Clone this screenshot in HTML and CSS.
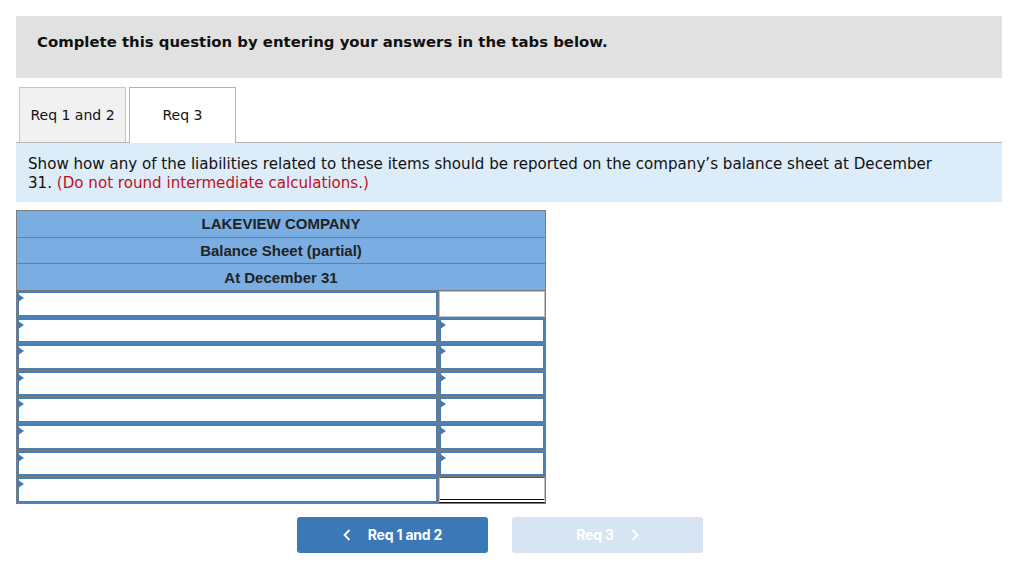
FILE: index.html
```html
<!DOCTYPE html>
<html lang="en">
<head>
	<meta charset="UTF-8">
	<title>Req 3</title>
	<link rel="stylesheet" href="styles.css">
</head>
<body>
	<div class="page">
		<div class="intro">Complete this question by entering your answers in the tabs below.</div>

		<ul class="tabs">
			<li class="tab">Req 1 and 2</li>
			<li class="tab active">Req 3</li>
		</ul>

		<div class="note">
			Show how any of the liabilities related to these items should be reported on the company’s balance sheet at December<br>31. <span class="red">(Do not round intermediate calculations.)</span>
		</div>

		<table class="sheet">
			<tr><th colspan="2">LAKEVIEW COMPANY</th></tr>
			<tr><th colspan="2">Balance Sheet (partial)</th></tr>
			<tr><th colspan="2">At December 31</th></tr>
			<tr>
				<td class="name"><div class="box"></div></td>
				<td class="amt"><div class="box empty"></div></td>
			</tr>
			<tr>
				<td class="name"><div class="box"></div></td>
				<td class="amt"><div class="box"></div></td>
			</tr>
			<tr>
				<td class="name"><div class="box"></div></td>
				<td class="amt"><div class="box"></div></td>
			</tr>
			<tr>
				<td class="name"><div class="box"></div></td>
				<td class="amt"><div class="box"></div></td>
			</tr>
			<tr>
				<td class="name"><div class="box"></div></td>
				<td class="amt"><div class="box"></div></td>
			</tr>
			<tr>
				<td class="name"><div class="box"></div></td>
				<td class="amt"><div class="box"></div></td>
			</tr>
			<tr>
				<td class="name"><div class="box"></div></td>
				<td class="amt"><div class="box"></div></td>
			</tr>
			<tr>
				<td class="name"><div class="box"></div></td>
				<td class="amt"><div class="box total"></div></td>
			</tr>
		</table>

		<div class="nav">
			<a class="btn prev">
				<svg class="chev" width="8" height="12" viewBox="0 0 8 12"><polyline points="6.5,1 1.5,6 6.5,11" fill="none" stroke="#fff" stroke-width="1.8"/></svg>
				Req 1 and 2
			</a>
			<a class="btn next">
				Req 3
				<svg class="chev" width="8" height="12" viewBox="0 0 8 12"><polyline points="1.5,1 6.5,6 1.5,11" fill="none" stroke="#fff" stroke-width="1.8"/></svg>
			</a>
		</div>
	</div>
</body>
</html>
```

FILE: styles.css
```css
*{ margin:0; padding:0; list-style:none; box-sizing:border-box;}
body{ font-family:"DejaVu Sans", Verdana, sans-serif; color:#111; background:#fff;}
.page{ width:986px; margin:16px 0 0 16px;}

.intro{ height:62px; background:#e1e1e1; padding:17px 0 0 21px; font-size:14.9px; font-weight:bold;}

.tabs{ display:flex; gap:3px; margin-top:9px; padding-left:3px; border-bottom:1px solid #b3b3b3; height:56px;}
.tab{ width:107px; height:55px; border:1px solid #c6c6c6; border-bottom:none; background:#f1f1f1; font-size:14px; text-align:center; line-height:55px;}
.tab.active{ background:#fff; border-color:#b3b3b3; height:56px; margin-bottom:-1px;}

.note{ background:#dcecf8; height:59px; padding:12px 12px 0 12px; font-size:15.1px; line-height:19px;}
.red{ color:#c0101c;}

.sheet{ margin-top:8px; width:530px; border-collapse:collapse; border:1px solid #7b7b7b; font-family:"Liberation Sans", Arial, sans-serif;}
.sheet th{ background:#7aaee2; border:1px solid #7b7b7b; height:26.7px; padding:0; font-size:15px; font-weight:bold; color:#222; text-align:center;}
.sheet td{ border:1px solid #7b7b7b; height:26.6px; padding:0; background:#fff;}
.sheet td.name{ width:423px;}
.sheet td.amt{ width:107px;}

.box{ position:relative; height:25.6px; border:2px solid #4a7eb6; background:#fff;}
.box::before{ content:""; position:absolute; left:-1px; top:1px; border-left:6px solid #3f79bb; border-top:4px solid transparent; border-bottom:4px solid transparent;}
.box.empty, .box.total{ border:1px solid #c0c0c0;}
.box.empty::before, .box.total::before{ display:none;}
.box.total{ border-top-color:#555; border-bottom:4px double #111;}

.nav{ display:flex; gap:24px; margin:13px 0 0 281px;}
.btn{ display:flex; align-items:center; justify-content:center; gap:17px; width:191px; height:36px; border-radius:3px; font-family:Inter, Roboto, sans-serif; font-size:14px; font-weight:bold; color:#fff; letter-spacing:-0.2px;}
.btn.prev{ background:#3b78b7;}
.btn.next{ background:#d7e4f2;}
.chev{ display:block;}
```
